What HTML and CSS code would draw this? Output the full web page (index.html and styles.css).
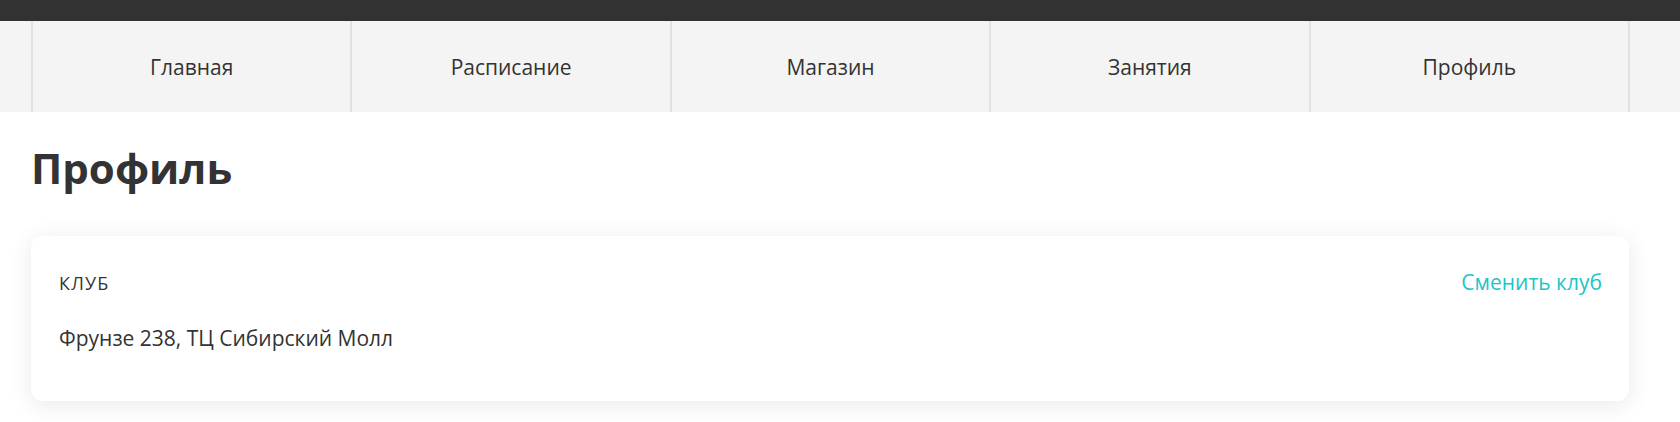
FILE: index.html
```html
<!DOCTYPE html>
<html lang="ru">
<head>
<meta charset="utf-8">
<title>Профиль</title>
<link rel="stylesheet" href="styles.css">
</head>
<body>
<div class="topbar"></div>
<nav class="nav">
  <div class="nav-inner">
    <a class="nav-item" href="#">Главная</a>
    <a class="nav-item" href="#">Расписание</a>
    <a class="nav-item" href="#">Магазин</a>
    <a class="nav-item" href="#">Занятия</a>
    <a class="nav-item" href="#">Профиль</a>
  </div>
</nav>
<main class="page">
  <h1 class="title">Профиль</h1>
  <section class="card">
    <div class="card-head">
      <span class="label">Клуб</span>
      <a class="link" href="#">Сменить клуб</a>
    </div>
    <p class="value">Фрунзе 238, ТЦ Сибирский Молл</p>
  </section>
</main>
</body>
</html>
```
FILE: styles.css
```css
html, body {
  margin: 0;
  padding: 0;
  background: #ffffff;
}
body {
  font-family: "Open Sans", "Noto Sans", sans-serif;
  color: #333333;
}
.topbar {
  height: 21px;
  background: #323232;
}
.nav {
  background: #f4f4f4;
  padding: 0 50px 0 31px;
}
.nav-inner {
  display: grid;
  grid-template-columns: repeat(5, 1fr);
  height: 91px;
  border-right: 2px solid #e2e2e2;
}
.nav-item {
  display: flex;
  align-items: center;
  justify-content: center;
  border-left: 2px solid #e2e2e2;
  color: #333333;
  text-decoration: none;
  font-size: 21px;
}
.page {
  padding: 0 51px 30px 31px;
}
.title {
  margin: 27px 0 40px;
  font-size: 42px;
  font-weight: 700;
  line-height: 57px;
  color: #333333;
}
.card {
  background: #ffffff;
  border-radius: 12px;
  box-shadow: 0 4px 24px rgba(0, 0, 0, 0.09);
  padding: 34px 27px 51px 28px;
}
.card-head {
  display: flex;
  justify-content: space-between;
  align-items: baseline;
}
.label {
  font-size: 18px;
  line-height: 24px;
  text-transform: uppercase;
  letter-spacing: 1.2px;
  color: #333333;
}
.link {
  font-size: 21px;
  line-height: 24px;
  color: #1cc5c8;
  text-decoration: none;
}
.value {
  margin: 31px 0 0;
  font-size: 21px;
  line-height: 24px;
  color: #333333;
}
```
